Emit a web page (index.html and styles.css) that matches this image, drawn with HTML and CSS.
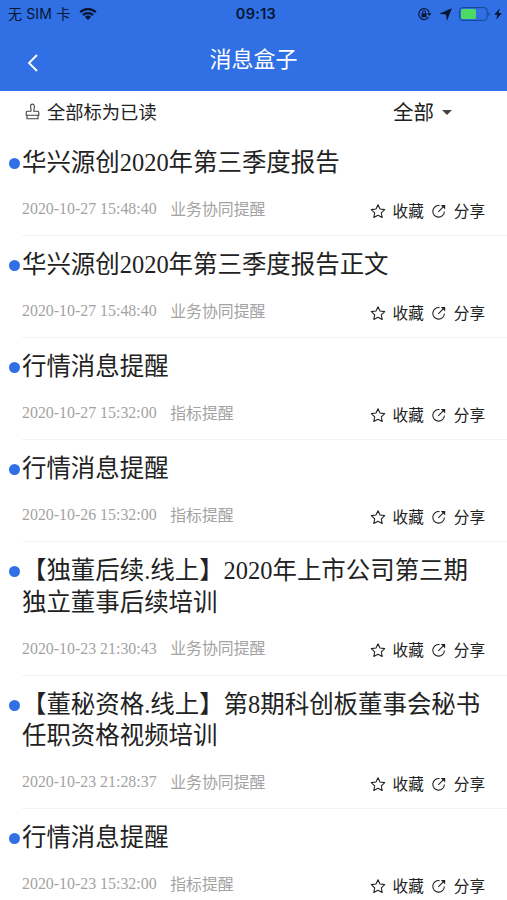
FILE: index.html
```
<!DOCTYPE html>
<html lang="zh-CN">
	<head>
		<meta charset="UTF-8">
		<title>消息盒子</title>
		<link rel="stylesheet" href="styles.css">
	</head>
	<body>
		<svg class="sprite" width="0" height="0">
			<symbol id="star" viewBox="0 0 16 16">
				<path d="M8 1.800l2 4.200 4.700.6-3.400 3.200.9 4.700L8 12.300l-4.200 2.200.9-4.700L1.300 6.600 6 6z" fill="none" stroke="currentColor" stroke-width="1.100" stroke-linejoin="round"/>
			</symbol>
			<symbol id="share" viewBox="0 0 16 16">
				<path d="M8.500 2.600A5.800 5.800 0 1 0 13.400 8.500M7.300 8.900L12.500 3.700" fill="none" stroke="currentColor" stroke-width="1.100"/>
				<path d="M9.800 2.100h4.400v4.400z" fill="currentColor"/>
			</symbol>
		</svg>
		<header class="header">
			<div class="status">
				<div class="carrier">
					<span>无 SIM 卡</span>
					<svg width="18" height="13" viewBox="0 0 18 13">
						<path d="M1.200 4.200a11.200 11.200 0 0 1 15.600 0M4 7.100a7.200 7.200 0 0 1 10 0" fill="none" stroke="#071633" stroke-width="2.400"/>
						<path d="M5.900 8.900a4.500 4.500 0 0 1 6.200 0L9 12.100z" fill="#071633"/>
					</svg>
				</div>
				<div class="clock">09:13</div>
				<div class="indicators">
					<svg width="15" height="14" viewBox="0 0 15 14">
						<path d="M11.600 10.200A5.400 5.400 0 1 1 12.200 5.200" fill="none" stroke="#071633" stroke-width="1.200"/>
						<path d="M10 6h4.500l-2.200 3z" fill="#071633"/>
						<path d="M4.500 6.300h5v3.900h-5z" fill="#071633"/>
						<path d="M5.500 6.500V5.200a1.500 1.500 0 0 1 3 0v1.300" fill="none" stroke="#071633"/>
					</svg>
					<svg class="arrow" width="13" height="13" viewBox="0 0 12 12">
						<path d="M11.800.200L7.400 11.800 6.400 5.900.200 5.200z" fill="#071633"/>
					</svg>
					<svg class="battery" width="32" height="14" viewBox="0 0 32 14">
						<rect x=".6" y=".6" width="27.500" height="12.800" rx="3" fill="none" stroke="#1b438e"/>
						<rect x="2" y="2" width="15" height="10" rx="1.500" fill="#4cd964"/>
						<path d="M29.500 5c1.600.6 1.600 3.400 0 4z" fill="#1b438e"/>
					</svg>
					<svg width="8" height="12" viewBox="0 0 8 12">
						<path d="M5.800.300L.300 6.700h3L2.200 11.700 7.700 5H4.600z" fill="#071633"/>
					</svg>
				</div>
			</div>
			<div class="navbar">
				<svg class="back" width="12" height="18" viewBox="0 0 12 18">
					<path d="M10 1L2 9l8 8" fill="none" stroke="#fff" stroke-width="1.900"/>
				</svg>
				<h1>消息盒子</h1>
			</div>
		</header>
		<div class="toolbar">
			<div class="readall">
				<svg width="15" height="17" viewBox="0 0 15 17">
					<path d="M6.200 8.200L5.600 3.600C5.600.300 9.400.300 9.400 3.600L8.800 8.200h3.700q1.300 0 1.300 1.300v2.700H1.200V9.500q0-1.300 1.300-1.300h3.700M2 12.200v3.600h11v-3.600" fill="none" stroke="#444" stroke-width="1.100"/>
				</svg>
				<span>全部标为已读</span>
			</div>
			<div class="filter">全部<i class="caret"></i></div>
		</div>
		<div class="list">
			<div class="item">
				<h2>华兴源创2020年第三季度报告</h2>
				<div class="meta">
					<span class="time">2020-10-27 15:48:40</span><span class="type">业务协同提醒</span>
					<div class="actions"><svg><use href="#star"/></svg><span>收藏</span><svg><use href="#share"/></svg><span>分享</span></div>
				</div>
			</div>
			<div class="item">
				<h2>华兴源创2020年第三季度报告正文</h2>
				<div class="meta">
					<span class="time">2020-10-27 15:48:40</span><span class="type">业务协同提醒</span>
					<div class="actions"><svg><use href="#star"/></svg><span>收藏</span><svg><use href="#share"/></svg><span>分享</span></div>
				</div>
			</div>
			<div class="item">
				<h2>行情消息提醒</h2>
				<div class="meta">
					<span class="time">2020-10-27 15:32:00</span><span class="type">指标提醒</span>
					<div class="actions"><svg><use href="#star"/></svg><span>收藏</span><svg><use href="#share"/></svg><span>分享</span></div>
				</div>
			</div>
			<div class="item">
				<h2>行情消息提醒</h2>
				<div class="meta">
					<span class="time">2020-10-26 15:32:00</span><span class="type">指标提醒</span>
					<div class="actions"><svg><use href="#star"/></svg><span>收藏</span><svg><use href="#share"/></svg><span>分享</span></div>
				</div>
			</div>
			<div class="item">
				<h2>【独董后续.线上】2020年上市公司第三期独立董事后续培训</h2>
				<div class="meta">
					<span class="time">2020-10-23 21:30:43</span><span class="type">业务协同提醒</span>
					<div class="actions"><svg><use href="#star"/></svg><span>收藏</span><svg><use href="#share"/></svg><span>分享</span></div>
				</div>
			</div>
			<div class="item">
				<h2>【董秘资格.线上】第8期科创板董事会秘书任职资格视频培训</h2>
				<div class="meta">
					<span class="time">2020-10-23 21:28:37</span><span class="type">业务协同提醒</span>
					<div class="actions"><svg><use href="#star"/></svg><span>收藏</span><svg><use href="#share"/></svg><span>分享</span></div>
				</div>
			</div>
			<div class="item">
				<h2>行情消息提醒</h2>
				<div class="meta">
					<span class="time">2020-10-23 15:32:00</span><span class="type">指标提醒</span>
					<div class="actions"><svg><use href="#star"/></svg><span>收藏</span><svg><use href="#share"/></svg><span>分享</span></div>
				</div>
			</div>
		</div>
	</body>
</html>
```

FILE: styles.css
```
* {
  box-sizing: border-box;
}

body {
  margin: 0;
  height: 900px;
  overflow: hidden;
  background: #fff;
  color: #222;
  font-family: "Liberation Serif", "Noto Sans CJK SC", serif;
}

.sprite {
  display: block;
}

/* Blue top area */
.header {
  height: 91px;
  background: #3070e4;
}

.status {
  display: grid;
  grid-template-columns: 1fr auto 1fr;
  align-items: center;
  height: 28px;
  padding: 0 5px 0 8px;
  color: #071633;
  font: 14px/28px Inter, "Noto Sans CJK SC", sans-serif;
}

.carrier, .indicators {
  display: flex;
  align-items: center;
}

.carrier {
  gap: 9px;
  letter-spacing: 0.15px;
}

.clock {
  padding-left: 2px;
  font-size: 14.5px;
  font-weight: 600;
  letter-spacing: 0.3px;
}

.indicators {
  justify-content: flex-end;
}

.arrow {
  margin: 0 7px;
}

.battery {
  margin-right: 3px;
}

.navbar {
  display: grid;
  grid-template-columns: 80px 1fr 80px;
  align-items: center;
  height: 63px;
}

.back {
  margin: 6px 0 0 27px;
}

.navbar h1 {
  margin: 0;
  color: #fff;
  font-size: 22px;
  font-weight: 400;
  line-height: 63px;
  text-align: center;
}

/* Mark all as read + filter */
.toolbar {
  display: flex;
  justify-content: space-between;
  align-items: center;
  height: 43px;
  padding: 0 55px 3px 25px;
}

.readall {
  display: flex;
  align-items: center;
  gap: 7px;
  font-size: 18.3px;
}

.readall span {
  margin-top: -1px;
}

.filter {
  display: flex;
  align-items: center;
  gap: 8px;
  font-size: 20.5px;
}

.caret {
  margin-top: 2px;
  border: 5px solid transparent;
  border-top-color: #444;
  border-bottom: 0;
}

/* Messages */
.item {
  position: relative;
  margin-left: 22px;
  padding: 13px 22px 12px 0;
  border-bottom: 1px solid #f3f3f3;
}

/* Unread dot */
.item::before {
  content: "";
  position: absolute;
  left: -13px;
  top: 24px;
  width: 11px;
  height: 11px;
  border-radius: 50%;
  background: #3070e4;
}

.item h2 {
  margin: 0;
  font-size: 24.45px;
  font-weight: 400;
  line-height: 31.7px;
}

.meta {
  display: flex;
  align-items: center;
  height: 28px;
  margin-top: 16.3px;
  color: #a3a3a3;
  font-size: 15.9px;
}

.time {
  margin-right: 13.5px;
}

.type {
  margin-top: -2px;
}

.actions {
  display: flex;
  align-items: center;
  margin: 3px 0 0 auto;
  color: #222;
  font-size: 15.6px;
}

.actions svg {
  width: 16px;
  height: 16px;
}

.actions span {
  margin: -2px 0 0 7px;
}

.actions span + svg {
  margin-left: 7px;
}
```
